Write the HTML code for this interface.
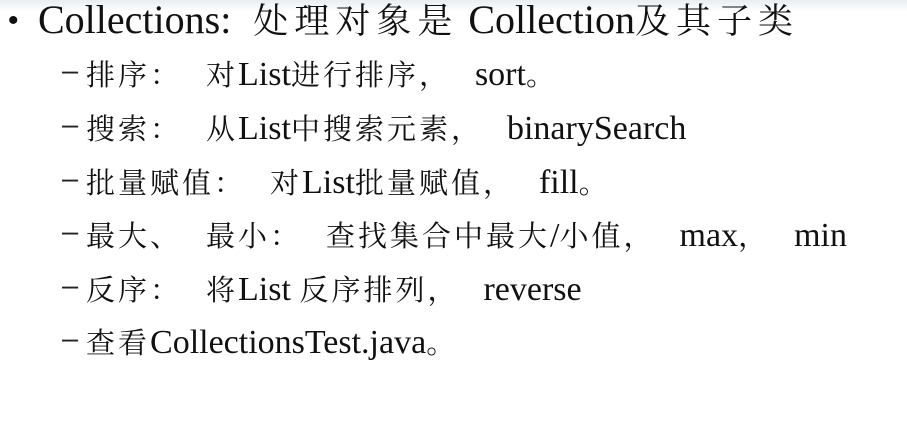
<!DOCTYPE html>
<html><head><meta charset="utf-8"><style>
html,body{margin:0;padding:0;background:#fff;width:907px;height:422px;overflow:hidden}
body{background:linear-gradient(#eaedf0 0px,#fff 12px,#fff 60px)}
.l{position:absolute;white-space:nowrap;color:#111;font-family:"Liberation Serif",serif;line-height:1}
.t{font-size:40px;left:38px;top:0px;font-family:"Liberation Serif",serif}
.t i{font-style:normal;font-size:35px;letter-spacing:6px;font-family:"Noto Serif CJK SC",serif}
.b{position:absolute;left:8px;top:6px;font-size:30px;font-family:"Liberation Sans",sans-serif}
.s{font-size:34px;left:86px;font-family:"Liberation Serif",serif}
.s i{font-style:normal;font-size:29px;letter-spacing:3px;font-family:"Noto Serif CJK SC",serif}
.s b{font-weight:normal;display:inline-block;width:56px;font-size:29px;font-family:"Noto Serif CJK SC",serif}
.d{position:absolute;left:62px;font-size:29px;font-family:"Liberation Sans",sans-serif;color:#222}
</style></head><body>
<div class="l b">•</div>
<div class="l t">Collections:<i style="margin-left:22px">处理对象是</i> Collection<i>及其子类</i></div>
<div class="l d" style="top:57px">–</div><div class="l s" style="top:58px"><i>排序</i><b>：</b><i>对</i>List<i>进行排序</i><b>，</b>sort<i>。</i></div>
<div class="l d" style="top:111px">–</div><div class="l s" style="top:112px"><i>搜索</i><b>：</b><i>从</i>List<i>中搜索元素</i><b>，</b>binarySearch</div>
<div class="l d" style="top:165px">–</div><div class="l s" style="top:166px"><i>批量赋值</i><b>：</b><i>对</i>List<i>批量赋值</i><b>，</b>fill<i>。</i></div>
<div class="l d" style="top:218px">–</div><div class="l s" style="top:219px"><i>最大</i><b>、</b><i>最小</i><b>：</b><i>查找集合中最大</i>/<i>小值</i><b>，</b>max<b>，</b>min</div>
<div class="l d" style="top:272px">–</div><div class="l s" style="top:273px"><i>反序</i><b>：</b><i>将</i>List <i>反序排列</i><b>，</b>reverse</div>
<div class="l d" style="top:325px">–</div><div class="l s" style="top:326px"><i>查看</i>CollectionsTest.java<i>。</i></div>
</body></html>
